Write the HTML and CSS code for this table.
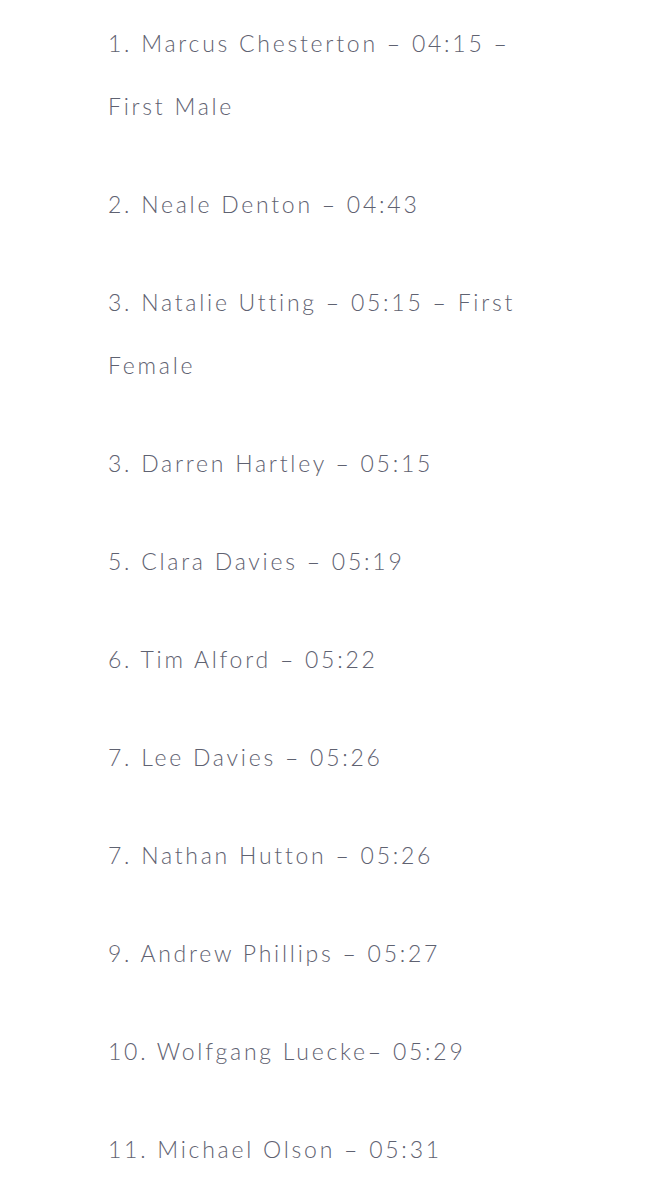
FILE: index.html
```html
<!DOCTYPE html>
<html lang="en">
<head>
    <meta charset="UTF-8">
    <meta name="viewport" content="width=device-width, initial-scale=1.0">
    <title>Results</title>
    <link rel="stylesheet" href="styles.css">
</head>
<body>
    <div class="results">
        <p>1. Marcus Chesterton – 04:15 – First Male</p>
        <p>2. Neale Denton – 04:43</p>
        <p>3. Natalie Utting – 05:15 – First Female</p>
        <p>3. Darren Hartley – 05:15</p>
        <p>5. Clara Davies – 05:19</p>
        <p>6. Tim Alford – 05:22</p>
        <p>7. Lee Davies – 05:26</p>
        <p>7. Nathan Hutton – 05:26</p>
        <p>9. Andrew Phillips – 05:27</p>
        <p>10. Wolfgang Luecke– 05:29</p>
        <p>11. Michael Olson – 05:31</p>
    </div>
</body>
</html>
```

FILE: styles.css
```css
body {
    margin: 0;
    background-color: #fff;
    font-family: Lato, "Open Sans", sans-serif;
    color: #5f6271;
}
.results {
    width: 425px;
    padding: 12px 0 0 108px;
}
.results p {
    margin: 0 0 35px;
    font-size: 23px;
    font-weight: 300;
    line-height: 63px;
    letter-spacing: 2.75px;
}
```
